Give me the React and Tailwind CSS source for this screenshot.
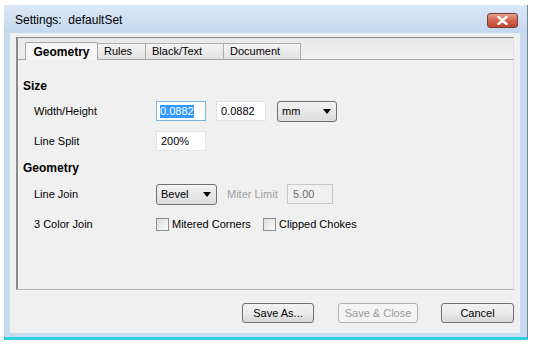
import React from 'react'

const font = { fontFamily: '"Liberation Sans", Arial, sans-serif' }

const Select = ({ value, width }) => (
  <div className={`${width} h-[21px] flex items-center justify-between px-[4px] rounded-[3px] border border-[#707070] bg-gradient-to-b from-[#f3f3f3] to-[#dcdcdc] text-[11px] text-black`}>
    <span>{value}</span>
    <svg width="8" height="5" viewBox="0 0 8 5" className="mr-[1px]">
      <path d="M0 0 L8 0 L4 5 Z" fill="#000" />
    </svg>
  </div>
)

const Checkbox = ({ label }) => (
  <div className="flex items-center">
    <div className="w-[13px] h-[13px] border border-[#8e8f8f] bg-gradient-to-br from-[#dcdcdc] to-[#fbfbfb]" />
    <span className="ml-[3px]">{label}</span>
  </div>
)

const Tab = ({ label, active, width }) =>
  active ? (
    <div className={`${width} h-[18px] -mb-px flex items-center justify-center bg-[#f7f7f7] border border-b-0 border-[#a5a5a5] rounded-t-[2px] font-bold text-[12px] z-10`}>
      {label}
    </div>
  ) : (
    <div className={`${width} h-[16px] flex items-center pl-[6px] bg-gradient-to-b from-[#f4f4f4] to-[#e2e2e2] border border-b-0 border-l-0 border-[#acacac] text-[11px]`}>
      {label}
    </div>
  )

const Button = ({ label, disabled, width }) => (
  <div className={`${width} h-[20px] flex items-center justify-center rounded-[3px] border text-[11px] ${disabled ? 'border-[#adb2b5] bg-[#f4f4f4] text-[#9a9a9a]' : 'border-[#707070] bg-gradient-to-b from-[#f2f2f2] via-[#ebebeb] to-[#d6d6d6] text-black'}`}>
    {label}
  </div>
)

export default function App() {
  return (
    <div className="w-[535px] h-[355px] bg-white pt-[5px] pl-[4px]" style={font}>
      <div className="w-[524px] h-[335px] flex flex-col bg-[#c5dbf1] border-r border-[#7a8794] rounded-tl-[4px] border-b-[3px] border-b-[#2ccfe4]">
        {/* title bar */}
        <div className="h-[28px] flex items-center justify-between pl-[11px] pr-[9px] bg-gradient-to-b from-[#dbe8f6] to-[#c3d8ee]">
          <span className="text-[12px] text-black mt-[2px]">Settings:&nbsp; defaultSet</span>
          <div className="w-[31px] h-[15px] mt-[3px] flex items-center justify-center rounded-[3px] border border-[#7d3a32] bg-gradient-to-b from-[#e59f8f] via-[#d2634d] to-[#c0462e]">
            <svg width="11" height="9" viewBox="0 0 11 9">
              <path d="M1.5 1 L9.5 8 M9.5 1 L1.5 8" stroke="#fff" strokeWidth="2.4" strokeLinecap="round" />
            </svg>
          </div>
        </div>

        {/* client area */}
        <div className="ml-[6px] mr-[7px] h-[300px] bg-[#f0f0f0] flex flex-col px-[6px] pt-[4px] text-[11px] text-black">
          <div className="h-[253px] flex flex-col border-t border-l-2 border-[#8a8a8a] border-b border-r border-b-[#b5b5b5] border-r-[#e0e0e0]">
            {/* tab strip */}
            <div className="h-[22px] flex items-end pl-[7px] bg-gradient-to-b from-[#e9e9e9] to-[#f0f0f0] border-b border-[#a5a5a5]">
              <Tab label="Geometry" active width="w-[73px]" />
              <Tab label="Rules" width="w-[48px]" />
              <Tab label="Black/Text" width="w-[78px]" />
              <Tab label="Document" width="w-[77px]" />
            </div>

            {/* pane */}
            <div className="flex-1 flex flex-col pl-[5px] pt-[18px]">
              <div className="h-[16px] flex items-center font-bold text-[12px]">Size</div>

              <div className="mt-[7px] h-[20px] flex items-center">
                <span className="w-[133px] pl-[11px] shrink-0">Width/Height</span>
                <div className="w-[50px] h-[20px] flex items-center pl-[3px] bg-white border border-[#7eb4ea]">
                  <span className="bg-[#3399ff] text-white leading-[13px]">0.0882</span>
                </div>
                <div className="ml-[10px] w-[50px] h-[20px] flex items-center pl-[4px] bg-white border border-[#e3e3e3]">0.0882</div>
                <div className="ml-[11px]">
                  <Select value="mm" width="w-[60px]" />
                </div>
              </div>

              <div className="mt-[10px] h-[20px] flex items-center">
                <span className="w-[133px] pl-[11px] shrink-0">Line Split</span>
                <div className="w-[50px] h-[20px] flex items-center pl-[4px] bg-white border border-[#e3e3e3]">200%</div>
              </div>

              <div className="mt-[9px] h-[16px] flex items-center font-bold text-[12px]">Geometry</div>

              <div className="mt-[8px] h-[20px] flex items-center">
                <span className="w-[133px] pl-[11px] shrink-0">Line Join</span>
                <Select value="Bevel" width="w-[61px]" />
                <span className="ml-[10px] w-[60px] text-[#a0a0a0]">Miter Limit</span>
                <div className="w-[46px] h-[20px] flex items-center pl-[5px] bg-[#f0f0f0] border border-[#c8c8c8] text-[#6d6d6d]">5.00</div>
              </div>

              <div className="mt-[10px] h-[20px] flex items-center">
                <span className="w-[133px] pl-[11px] shrink-0">3 Color Join</span>
                <div className="w-[107px]">
                  <Checkbox label="Mitered Corners" />
                </div>
                <Checkbox label="Clipped Chokes" />
              </div>
            </div>
          </div>

          {/* buttons */}
          <div className="mt-[13px] flex justify-end">
            <Button label="Save As..." width="w-[72px]" />
            <div className="ml-[24px]">
              <Button label="Save & Close" disabled width="w-[80px]" />
            </div>
            <div className="ml-[23px]">
              <Button label="Cancel" width="w-[73px]" />
            </div>
          </div>
        </div>
      </div>
    </div>
  )
}
